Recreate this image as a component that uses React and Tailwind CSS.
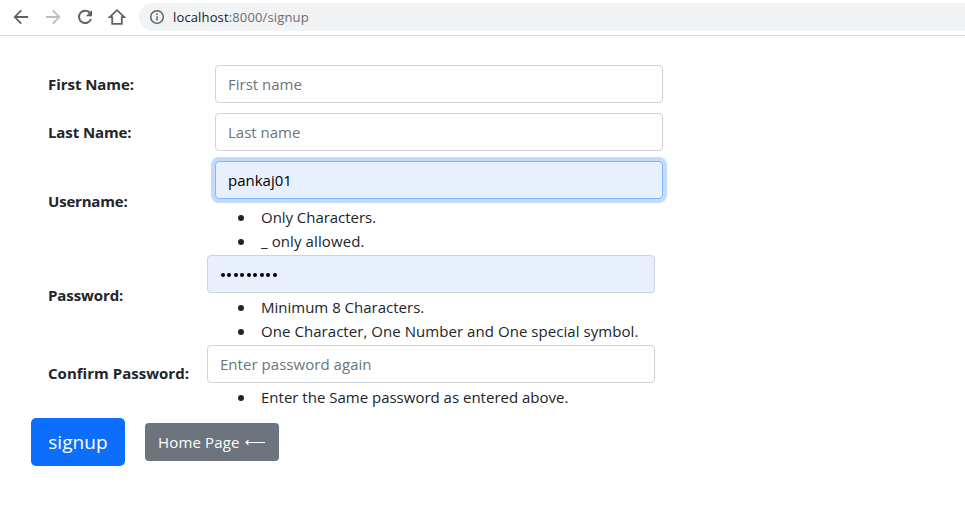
const field =
  "block h-[38px] w-[448px] rounded border px-3 text-[15px] leading-6 outline-none placeholder:text-[#6c757d] placeholder:opacity-100";

function Rules({ children }) {
  return <ul className="list-none text-[15px] leading-6">{children}</ul>;
}

function Rule({ children, className }) {
  return (
    <li className="flex h-6 items-center">
      <span className="ml-[31px] mr-[17px] mt-px size-[6px] shrink-0 rounded-full bg-[#212529]" />
      <span className={"whitespace-nowrap " + className}>{children}</span>
    </li>
  );
}

function Label({ children, className }) {
  return (
    <label className={"w-[159px] shrink-0 whitespace-nowrap text-[15px] font-bold leading-6 " + className}>
      {children}
    </label>
  );
}

export default function App() {
  return (
    <div className="h-[532px] w-[965px] overflow-hidden bg-white font-['Open_Sans','Noto_Sans',sans-serif] text-[#212529]">
      <header className="flex h-9 items-start border-b border-[#dadce0] pl-[12px] pt-[3px]">
        <nav className="flex h-7 items-center gap-[14px] text-[#5f6368]">
          <svg className="size-[18px]" viewBox="0 0 24 24" fill="currentColor">
            <path d="M21.5 10.8H6.6l6.7-6.7L11.6 2.4 2 12l9.6 9.6 1.7-1.7-6.7-6.7h14.9z" />
          </svg>
          <svg className="size-[18px] text-[#babcbe]" viewBox="0 0 24 24" fill="currentColor">
            <path d="M2.5 10.8h14.9l-6.7-6.7 1.7-1.7L22 12l-9.6 9.6-1.7-1.7 6.7-6.7H2.5z" />
          </svg>
          <svg className="size-[18px]" viewBox="0 0 18 18" fill="none" stroke="currentColor" strokeWidth="2">
            <path d="M14.2 5.2A6.2 6.2 0 1 0 15 11" />
            <path d="M16 2v6.2H9.8z" fill="currentColor" stroke="none" />
          </svg>
          <svg className="size-[18px]" viewBox="0 0 18 18" fill="none" stroke="currentColor" strokeWidth="1.8">
            <path d="M1.7 9.1 9 2.2l7.3 6.9h-2.5v6.7H4.2V9.1z" />
          </svg>
        </nav>
        <div className="ml-[13px] flex h-7 grow items-center rounded-l-full bg-[#f1f3f4] pl-[10px]">
          <svg className="size-4" viewBox="0 0 16 16" fill="none" stroke="#5f6368" strokeWidth="1.5">
            <circle cx="8" cy="8" r="6.3" />
            <path d="M8 7.2v4.3M8 4.3v1.6" />
          </svg>
          <span className="ml-[8px] text-[13px] leading-4 tracking-[0.14px] text-[#6a6d71]">
            <span className="text-[#202124]">localhost</span>:8000/signup
          </span>
        </div>
      </header>

      <form className="pl-[48px] pt-[29px]">
        <div className="flex h-12 items-start">
          <Label className="mt-[7px] tracking-[-0.05px]">First Name:</Label>
          <input className={field + " ml-[8px] border-[#ced4da]"} placeholder="First name" />
        </div>
        <div className="flex h-12 items-start">
          <Label className="mt-[7px] tracking-[-0.1px]">Last Name:</Label>
          <input className={field + " ml-[8px] border-[#ced4da]"} placeholder="Last name" />
        </div>
        <div className="flex h-[94px] items-start">
          <Label className="mt-[28px] tracking-[-0.2px]">Username:</Label>
          <div>
            <input
              className={field + " mb-[6px] ml-[8px] border-[#86b7fe] bg-[#e8f0fe] text-black ring-4 ring-[#c2dbfe]"}
              defaultValue="pankaj01"
            />
            <Rules>
              <Rule className="tracking-[-0.04px]">Only Characters.</Rule>
              <Rule className="tracking-[0.1px]">_ only allowed.</Rule>
            </Rules>
          </div>
        </div>
        <div className="flex h-[90px] items-start">
          <Label className="mt-[28px] tracking-[-0.1px]">Password:</Label>
          <div>
            <div className={field + " mb-[2px] border-[#ced4da] bg-[#e8f0fe]"}>
              <div className="flex h-full items-center gap-[2.5px] pl-[0.5px] pt-[2px]">
                {Array.from({ length: 9 }, (_, i) => (
                  <span key={i} className="size-[4px] rounded-full bg-black" />
                ))}
              </div>
            </div>
            <Rules>
              <Rule className="">Minimum 8 Characters.</Rule>
              <Rule className="tracking-[0.055px]">One Character, One Number and One special symbol.</Rule>
            </Rules>
          </div>
        </div>
        <div className="flex h-[73px] items-start">
          <Label className="mt-[16px] tracking-[0.02px]">Confirm Password:</Label>
          <div>
            <input className={field + " mb-[2px] border-[#ced4da] tracking-[0.04px]"} placeholder="Enter password again" />
            <Rules>
              <Rule className="">Enter the Same password as entered above.</Rule>
            </Rules>
          </div>
        </div>
        <div className="-ml-[17px] flex items-center gap-5 text-white">
          <button type="button" className="h-12 w-[94px] rounded-[5px] bg-[#0d6efd] text-[19px] leading-[30px] tracking-[0.1px]">
            signup
          </button>
          <button
            type="button"
            className="flex h-[38px] w-[134px] items-center whitespace-nowrap rounded bg-[#6c757d] pl-[13px] text-[15px] leading-6 tracking-[0.15px]"
          >
            Home Page
            <svg className="ml-[5px] h-[8px] w-[20px]" viewBox="0 0 20 8" fill="none" stroke="currentColor" strokeWidth="1.2">
              <path d="M20 4.5H1M3.5 2.3 1 4.5l2.5 2.2" />
            </svg>
          </button>
        </div>
      </form>
    </div>
  );
}
